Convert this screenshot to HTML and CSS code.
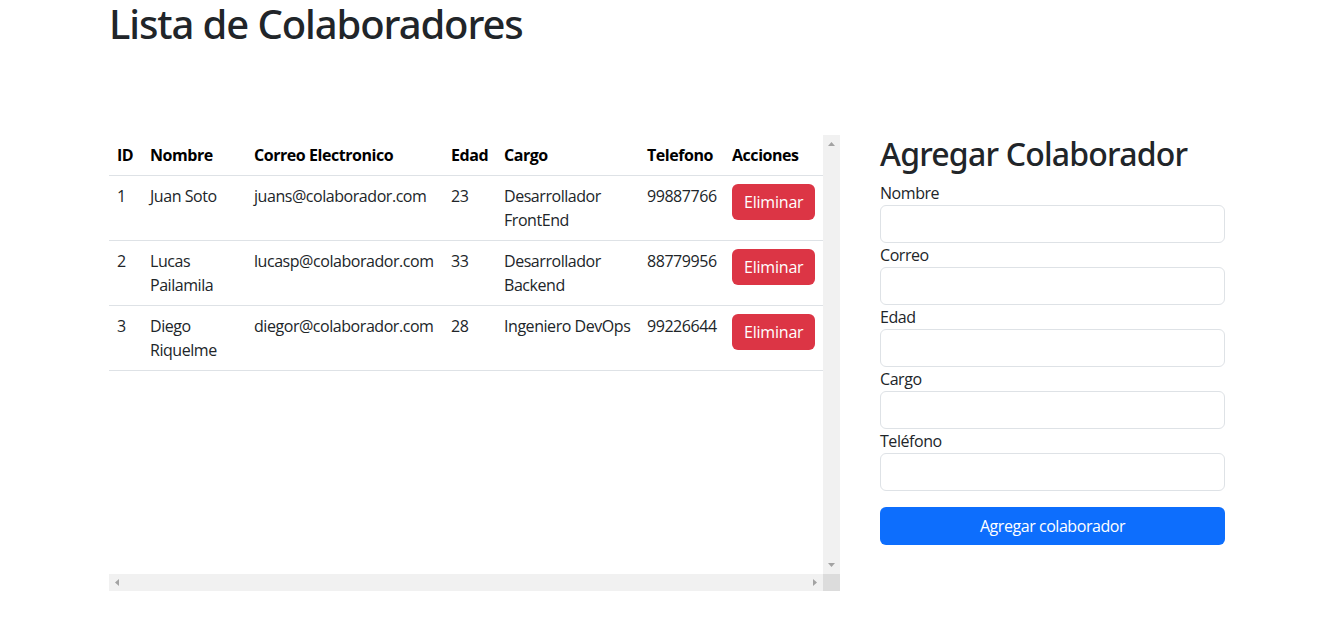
FILE: index.html
```html
<!DOCTYPE html>
<html lang="es">
<head>
<meta charset="utf-8">
<title>Lista de Colaboradores</title>
<link rel="stylesheet" href="styles.css">
</head>
<body>
<main class="page">
  <h1 class="title">Lista de Colaboradores</h1>
  <div class="layout">
    <div class="scrollbox">
      <div class="viewport">
        <table class="grid">
          <colgroup>
            <col class="c-id"><col class="c-nombre"><col class="c-correo"><col class="c-edad"><col class="c-cargo"><col class="c-tel"><col class="c-acc">
          </colgroup>
          <thead>
            <tr><th>ID</th><th>Nombre</th><th>Correo Electronico</th><th>Edad</th><th>Cargo</th><th>Telefono</th><th>Acciones</th></tr>
          </thead>
          <tbody>
            <tr><td>1</td><td>Juan Soto</td><td>juans@colaborador.com</td><td>23</td><td>Desarrollador FrontEnd</td><td>99887766</td><td><button class="btn-del">Eliminar</button></td></tr>
            <tr><td>2</td><td>Lucas Pailamila</td><td>lucasp@colaborador.com</td><td>33</td><td>Desarrollador Backend</td><td>88779956</td><td><button class="btn-del">Eliminar</button></td></tr>
            <tr><td>3</td><td>Diego Riquelme</td><td>diegor@colaborador.com</td><td>28</td><td>Ingeniero DevOps</td><td>99226644</td><td><button class="btn-del">Eliminar</button></td></tr>
          </tbody>
        </table>
      </div>
      <div class="vbar">
        <svg class="arrow" width="7" height="4" viewBox="0 0 7 4"><polygon points="0,4 3.5,0 7,4" fill="#a3a3a3"/></svg>
        <svg class="arrow" width="7" height="4" viewBox="0 0 7 4"><polygon points="0,0 7,0 3.5,4" fill="#a3a3a3"/></svg>
      </div>
      <div class="hbar">
        <svg class="arrow" width="4" height="7" viewBox="0 0 4 7"><polygon points="4,0 4,7 0,3.5" fill="#a3a3a3"/></svg>
        <svg class="arrow" width="4" height="7" viewBox="0 0 4 7"><polygon points="0,0 4,3.5 0,7" fill="#a3a3a3"/></svg>
      </div>
      <div class="corner"></div>
    </div>
    <section class="form-col">
      <h2 class="form-title">Agregar Colaborador</h2>
      <form class="form">
        <label class="lbl" for="f-nombre">Nombre</label>
        <input class="field" id="f-nombre" type="text">
        <label class="lbl" for="f-correo">Correo</label>
        <input class="field" id="f-correo" type="text">
        <label class="lbl" for="f-edad">Edad</label>
        <input class="field" id="f-edad" type="text">
        <label class="lbl" for="f-cargo">Cargo</label>
        <input class="field" id="f-cargo" type="text">
        <label class="lbl" for="f-tel">Teléfono</label>
        <input class="field" id="f-tel" type="text">
        <button class="btn-add" type="button">Agregar colaborador</button>
      </form>
    </section>
  </div>
</main>
</body>
</html>
```
FILE: styles.css
```css
* { box-sizing: border-box; }
body {
  margin: 0;
  font-family: "Open Sans", "Noto Sans", sans-serif;
  font-size: 16px;
  line-height: 24px;
  letter-spacing: -0.45px;
  color: #212529;
  background: #fff;
}
.page { padding-left: 109px; }
.title {
  margin: 0 0 87px;
  font-family: "Noto Sans", "Open Sans", sans-serif;
  font-size: 40px;
  line-height: 48px;
  font-weight: 500;
  letter-spacing: -1.1px;
}
.layout {
  display: flex;
  align-items: flex-start;
  gap: 40px;
}
.scrollbox {
  display: grid;
  grid-template-columns: 714px 17px;
  grid-template-rows: 439px 17px;
}
.viewport { overflow: hidden; }
.grid {
  width: 714px;
  border-collapse: collapse;
  table-layout: fixed;
}
.c-id { width: 33px; }
.c-nombre { width: 104px; }
.c-correo { width: 197px; }
.c-edad { width: 53px; }
.c-cargo { width: 143px; }
.c-tel { width: 85px; }
.c-acc { width: 99px; }
.grid th, .grid td {
  padding: 8px;
  text-align: left;
  vertical-align: top;
  border-bottom: 1px solid #dee2e6;
  line-height: 24px;
}
.grid th { font-weight: 700; vertical-align: bottom; color: #000; }
.btn-del {
  font: inherit;
  letter-spacing: -0.2px;
  line-height: 24px;
  padding: 6px 12px;
  border: 0;
  border-radius: 6px;
  background: #dc3545;
  color: #fff;
}
.vbar, .hbar { background: #f1f1f1; display: flex; justify-content: space-between; align-items: center; }
.vbar { flex-direction: column; padding: 7px 0; }
.hbar { padding: 0 6px; }
.arrow { display: block; }
.corner { background: #dcdcdc; }
.form-col { width: 345px; }
.form-title {
  margin: 0 0 8px;
  font-family: "Noto Sans", "Open Sans", sans-serif;
  font-size: 32px;
  line-height: 38.4px;
  font-weight: 500;
  letter-spacing: -0.8px;
}
.form { display: flex; flex-direction: column; }
.lbl { display: block; line-height: 24px; }
.field {
  display: block;
  width: 100%;
  height: 38px;
  border: 1px solid #dee2e6;
  border-radius: 6px;
  font: inherit;
  background: #fff;
}
.btn-add {
  margin-top: 16px;
  height: 38px;
  border: 0;
  border-radius: 6px;
  background: #0d6efd;
  color: #fff;
  font: inherit;
  letter-spacing: inherit;
}
```
